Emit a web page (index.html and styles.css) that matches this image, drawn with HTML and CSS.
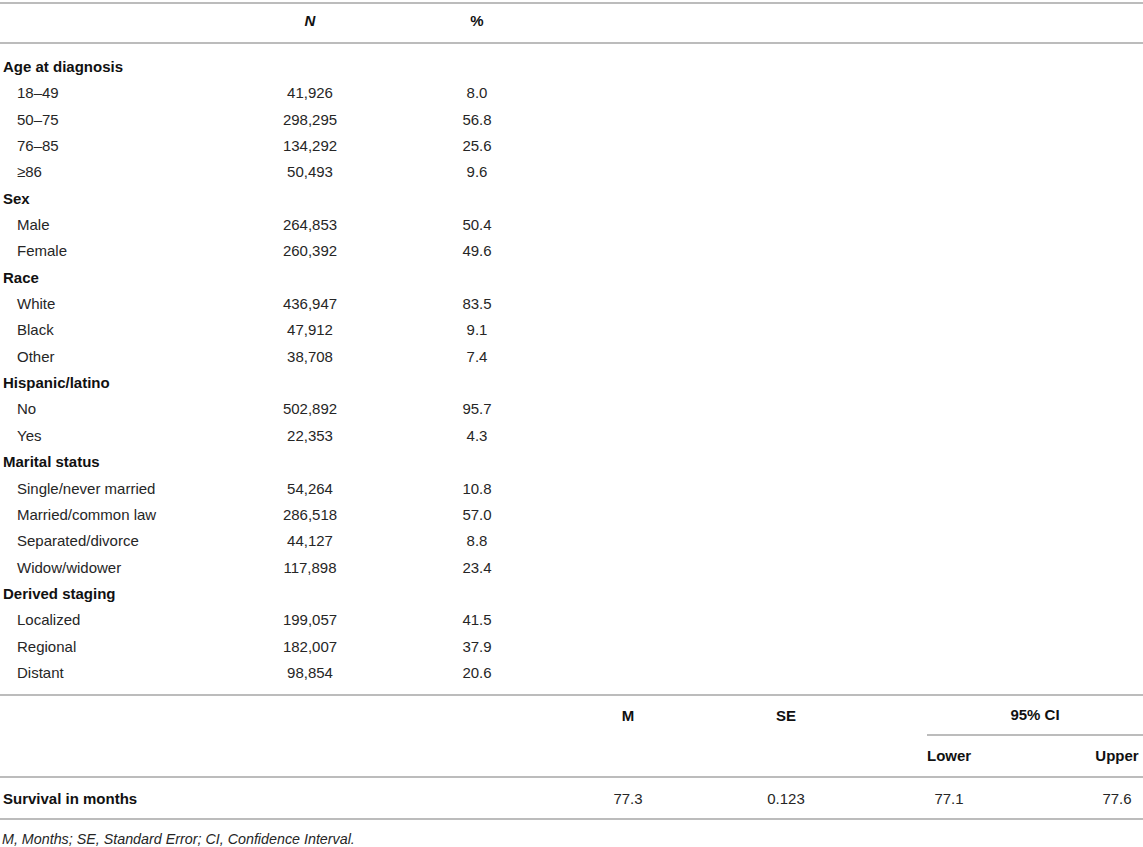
FILE: index.html
```html
<!DOCTYPE html>
<html lang="en">
<head>
    <meta charset="UTF-8">
    <meta name="viewport" content="width=device-width, initial-scale=1.0">
    <title>Patient characteristics and survival</title>
    <link rel="stylesheet" href="styles.css">
</head>
<body>
<div class="sheet">

<!-- demographics -->
<table class="stats">
    <colgroup>
        <col class="c-label">
        <col class="c-n">
        <col class="c-pct">
        <col>
    </colgroup>
    <thead>
        <tr>
            <th></th>
            <th><i>N</i></th>
            <th>%</th>
            <th></th>
        </tr>
    </thead>
    <tbody>
        <tr class="group first"><td colspan="4">Age at diagnosis</td></tr>
        <tr><td class="sub">18–49</td><td>41,926</td><td>8.0</td><td></td></tr>
        <tr><td class="sub">50–75</td><td>298,295</td><td>56.8</td><td></td></tr>
        <tr><td class="sub">76–85</td><td>134,292</td><td>25.6</td><td></td></tr>
        <tr><td class="sub">≥86</td><td>50,493</td><td>9.6</td><td></td></tr>
        <tr class="group"><td colspan="4">Sex</td></tr>
        <tr><td class="sub">Male</td><td>264,853</td><td>50.4</td><td></td></tr>
        <tr><td class="sub">Female</td><td>260,392</td><td>49.6</td><td></td></tr>
        <tr class="group"><td colspan="4">Race</td></tr>
        <tr><td class="sub">White</td><td>436,947</td><td>83.5</td><td></td></tr>
        <tr><td class="sub">Black</td><td>47,912</td><td>9.1</td><td></td></tr>
        <tr><td class="sub">Other</td><td>38,708</td><td>7.4</td><td></td></tr>
        <tr class="group"><td colspan="4">Hispanic/latino</td></tr>
        <tr><td class="sub">No</td><td>502,892</td><td>95.7</td><td></td></tr>
        <tr><td class="sub">Yes</td><td>22,353</td><td>4.3</td><td></td></tr>
        <tr class="group"><td colspan="4">Marital status</td></tr>
        <tr><td class="sub">Single/never married</td><td>54,264</td><td>10.8</td><td></td></tr>
        <tr><td class="sub">Married/common law</td><td>286,518</td><td>57.0</td><td></td></tr>
        <tr><td class="sub">Separated/divorce</td><td>44,127</td><td>8.8</td><td></td></tr>
        <tr><td class="sub">Widow/widower</td><td>117,898</td><td>23.4</td><td></td></tr>
        <tr class="group"><td colspan="4">Derived staging</td></tr>
        <tr><td class="sub">Localized</td><td>199,057</td><td>41.5</td><td></td></tr>
        <tr><td class="sub">Regional</td><td>182,007</td><td>37.9</td><td></td></tr>
        <tr class="last"><td class="sub">Distant</td><td>98,854</td><td>20.6</td><td></td></tr>
    </tbody>
</table>

<!-- survival -->
<table class="survival">
    <colgroup>
        <col class="c-s-label">
        <col class="c-m">
        <col class="c-se">
        <col class="c-gap1">
        <col class="c-lower">
        <col class="c-gap2">
        <col class="c-upper">
    </colgroup>
    <thead>
        <tr class="head-top">
            <th></th>
            <th>M</th>
            <th>SE</th>
            <th></th>
            <th colspan="3" class="ci">95% CI</th>
        </tr>
        <tr class="head-sub">
            <th></th>
            <th></th>
            <th></th>
            <th></th>
            <th>Lower</th>
            <th></th>
            <th>Upper</th>
        </tr>
    </thead>
    <tbody>
        <tr>
            <td class="label">Survival in months</td>
            <td>77.3</td>
            <td>0.123</td>
            <td></td>
            <td>77.1</td>
            <td></td>
            <td>77.6</td>
        </tr>
    </tbody>
</table>

<p class="note">M, Months; SE, Standard Error; CI, Confidence Interval.</p>

</div>
</body>
</html>
```

FILE: styles.css
```css
body {
    margin: 0;
    background-color: #ffffff;
    color: #262626;
    font-family: "Liberation Sans", Arial, sans-serif;
    font-size: 15px;
}

.sheet {
    width: 1143px;
    padding-top: 2px;
}

table {
    width: 100%;
    table-layout: fixed;
    border-collapse: separate;
    border-spacing: 0;
}

th,
td {
    padding: 0;
    text-align: center;
    line-height: 18px;
    font-weight: normal;
}

th {
    font-weight: bold;
    color: #111;
}

/* column widths */
.c-label { width: 230px; }
.c-n { width: 160px; }
.c-pct { width: 174px; }

.c-s-label { width: 564px; }
.c-m { width: 128px; }
.c-se { width: 188px; }
.c-gap1 { width: 47px; }
.c-lower { width: 44px; }
.c-gap2 { width: 120px; }
.c-upper { width: 52px; }

/* demographics table */
.stats thead th {
    border-top: 2px solid #bcbcbc;
    border-bottom: 2px solid #bcbcbc;
    padding: 8px 0 12px;
}

.stats tbody td {
    height: 26.35px;
    padding: 0;
    line-height: 26.35px;
}

.stats tr.first td {
    padding-top: 10px;
}

.stats tr.last td {
    padding-bottom: 8px;
}

.stats tr.group td {
    text-align: left;
    font-weight: bold;
    color: #111;
    padding-left: 3px;
}

.stats td.sub {
    text-align: left;
    padding-left: 17px;
}

/* survival table */
.survival thead tr.head-top th {
    border-top: 2px solid #bcbcbc;
    padding: 10px 0 10px;
}

.survival thead tr.head-top th.ci {
    border-bottom: 2px solid #bcbcbc;
}

.survival thead tr.head-sub th {
    padding: 11px 0 11px;
    border-bottom: 2px solid #bcbcbc;
}

.survival tbody td {
    padding: 12px 0 10px;
    border-bottom: 2px solid #bcbcbc;
}

.survival td.label {
    text-align: left;
    font-weight: bold;
    color: #111;
    padding-left: 3px;
}

.note {
    margin: 10px 0 0;
    padding-left: 2px;
    font-size: 14.3px;
    font-style: italic;
    line-height: 18px;
}
```
